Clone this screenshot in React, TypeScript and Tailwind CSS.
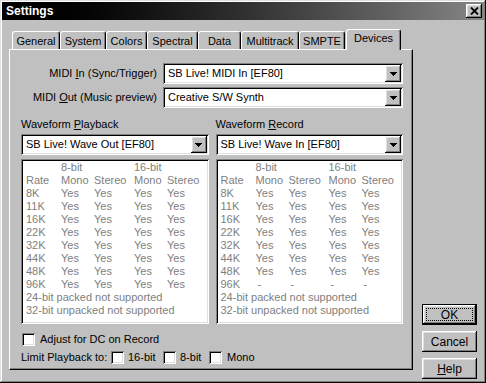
import React from "react";

const RAISED =
  "shadow-[inset_-1px_-1px_0_#000,inset_1px_1px_0_#fff,inset_-2px_-2px_0_#808080,inset_2px_2px_0_#dfdfdf]";
const SUNKEN =
  "shadow-[inset_1px_1px_0_#808080,inset_-1px_-1px_0_#fff,inset_2px_2px_0_#000,inset_-2px_-2px_0_#dfdfdf]";

const tabs: [string, string][] = [
  ["General", "w-[48px]"],
  ["System", "w-[46px]"],
  ["Colors", "w-[41px]"],
  ["Spectral", "w-[51px]"],
  ["Data", "w-[43px]"],
  ["Multitrack", "w-[58px]"],
  ["SMPTE", "w-[46px]"],
];

function Arrow() {
  return (
    <svg width="7" height="4" viewBox="0 0 7 4" shapeRendering="crispEdges">
      <path d="M0 0h7v1H0z M1 1h5v1H1z M2 2h3v1H2z M3 3h1v1H3z" fill="#000" />
    </svg>
  );
}

function Combo({ text }: { text: string }) {
  return (
    <div className={`h-[21px] bg-white flex items-center ${SUNKEN}`}>
      <div className="flex-1 pl-[5px] leading-[17px] whitespace-nowrap overflow-hidden">{text}</div>
      <div className={`w-[16px] h-[17px] mr-[2px] bg-[#c0c0c0] flex items-center justify-center ${RAISED}`}>
        <Arrow />
      </div>
    </div>
  );
}

function Check() {
  return <div className={`w-[13px] h-[13px] bg-white shrink-0 ${SUNKEN}`} />;
}

const rates = ["8K", "11K", "16K", "22K", "32K", "44K", "48K", "96K"];

function CapsList({ record }: { record?: boolean }) {
  return (
    <div className={`mt-[4px] h-[165px] bg-white pl-[5px] pt-[2px] text-[#808080] ${SUNKEN}`}>
      <div className="grid grid-cols-[35px_33px_40px_33px_1fr] leading-[13px] whitespace-nowrap">
        <div />
        <div>8-bit</div>
        <div />
        <div>16-bit</div>
        <div />
        <div>Rate</div>
        <div>Mono</div>
        <div>Stereo</div>
        <div>Mono</div>
        <div>Stereo</div>
        {rates.map((r) => {
          const dash = record && r === "96K";
          return (
            <React.Fragment key={r}>
              <div>{r}</div>
              {[0, 1, 2, 3].map((i) =>
                dash ? (
                  <div key={i} className="pl-[2px]">-</div>
                ) : (
                  <div key={i}>Yes</div>
                )
              )}
            </React.Fragment>
          );
        })}
      </div>
      <div className="leading-[13px]">24-bit packed not supported</div>
      <div className="leading-[13px]">32-bit unpacked not supported</div>
    </div>
  );
}

export default function App() {
  return (
    <div
      className={`w-[486px] h-[383px] bg-[#c0c0c0] p-[2px] flex flex-col text-[11px] text-black font-['Liberation_Sans',Arial,sans-serif] shadow-[inset_-1px_-1px_0_#000,inset_1px_1px_0_#dfdfdf,inset_-2px_-2px_0_#808080,inset_2px_2px_0_#fff]`}
    >
      {/* Title bar */}
      <div className="h-[18px] flex items-center bg-linear-to-r from-black to-[#868686] pl-[4px]">
        <span className="text-white font-bold text-[12px] leading-[18px]">Settings</span>
        <div className={`ml-auto mr-[2px] w-[16px] h-[14px] bg-[#c0c0c0] flex items-center justify-center ${RAISED}`}>
          <svg width="9" height="8" viewBox="0 0 9 8">
            <path d="M1 0.5 L8 7.5 M8 0.5 L1 7.5" stroke="#000" strokeWidth="1.8" />
          </svg>
        </div>
      </div>

      {/* Body */}
      <div className="flex flex-1 pt-[9px] pl-[7px]">
        <div className="w-[404px] flex flex-col">
          {/* Tabs */}
          <div className="flex items-end h-[20px] pl-[3px]">
            {tabs.map(([t, w]) => (
              <div
                key={t}
                className={`${w} h-[18px] flex items-center justify-center border-t border-l border-white border-r border-r-black rounded-t-[3px] shadow-[inset_-1px_0_0_#808080] leading-[16px]`}
              >
                {t}
              </div>
            ))}
            <div className="w-[55px] h-[21px] -mb-px ml-px relative z-10 bg-[#c0c0c0] flex items-center justify-center pb-[3px] border-t border-l border-white border-r border-r-black rounded-t-[3px] shadow-[inset_-1px_0_0_#808080]">
              Devices
            </div>
          </div>

          {/* Panel */}
          <div className="h-[321px] bg-[#c0c0c0] border-l border-t border-white border-r border-b border-r-black border-b-black shadow-[inset_-1px_-1px_0_#808080] pt-[13px] pl-[11px] pr-[9px] flex flex-col">
            <div className="flex items-center gap-[6px]">
              <div className="w-[136px] text-right whitespace-nowrap">
                MIDI <span className="underline">I</span>n (Sync/Trigger)
              </div>
              <div className="flex-1">
                <Combo text="SB Live! MIDI In [EF80]" />
              </div>
            </div>
            <div className="flex items-center gap-[6px] mt-[3px]">
              <div className="w-[136px] text-right whitespace-nowrap">
                MIDI <span className="underline">O</span>ut (Music preview)
              </div>
              <div className="flex-1">
                <Combo text="Creative S/W Synth" />
              </div>
            </div>

            <div className="grid grid-cols-2 gap-x-[7px] mt-[9px]">
              <div className="flex flex-col">
                <div className="leading-[14px] h-[14px]">
                  Waveform <span className="underline">P</span>layback
                </div>
                <div className="mt-[3px]">
                  <Combo text="SB Live! Wave Out [EF80]" />
                </div>
                <CapsList />
              </div>
              <div className="flex flex-col">
                <div className="leading-[14px] h-[14px]">
                  Waveform <span className="underline">R</span>ecord
                </div>
                <div className="mt-[3px]">
                  <Combo text="SB Live! Wave In [EF80]" />
                </div>
                <CapsList record />
              </div>
            </div>

            <div className="flex items-center mt-[9px] h-[13px] pl-px">
              <Check />
              <span className="ml-[5px]">Adjust for DC on Record</span>
            </div>
            <div className="flex items-center mt-[5px] h-[13px]">
              <span className="w-[90px] whitespace-nowrap">Limit Playback to:</span>
              <Check />
              <span className="ml-[4px] w-[35px]">16-bit</span>
              <Check />
              <span className="ml-[4px] w-[29px]">8-bit</span>
              <Check />
              <span className="ml-[5px]">Mono</span>
            </div>
          </div>
        </div>

        {/* Buttons */}
        <div className="ml-[9px] w-[55px] flex flex-col justify-end gap-[6px] pb-[2px]">
          <div className="relative h-[21px] border border-black">
            <div className={`h-full flex items-center justify-center ${RAISED} text-[12px]`}>OK</div>
            <span className="absolute left-[3px] right-[3px] top-[3px] bottom-[3px] border border-dotted border-black" />
          </div>
          <div className={`h-[21px] flex items-center justify-center ${RAISED} text-[12px]`}>Cancel</div>
          <div className={`h-[21px] flex items-center justify-center ${RAISED} text-[12px]`}>
            <span>
              <span className="underline">H</span>elp
            </span>
          </div>
        </div>
      </div>
    </div>
  );
}
